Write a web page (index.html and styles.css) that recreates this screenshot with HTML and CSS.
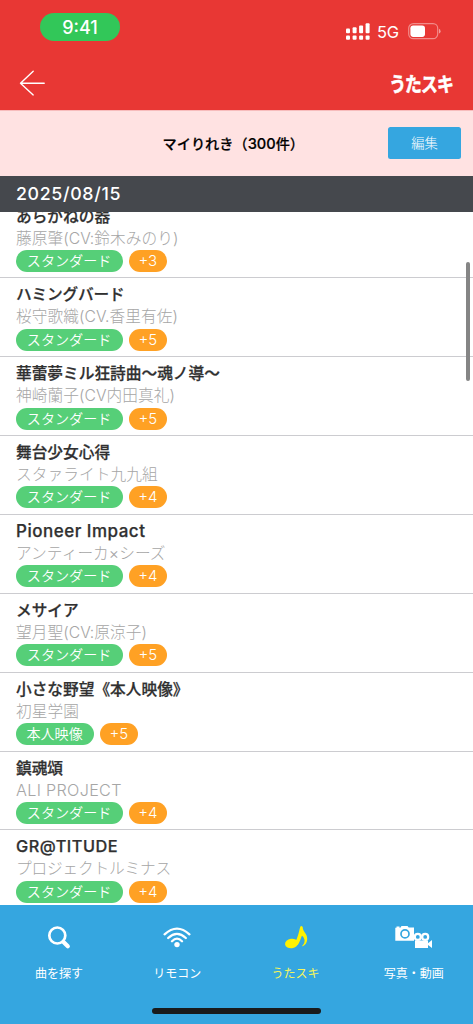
FILE: index.html
```html
<!DOCTYPE html>
<html lang="ja">
<head>
<meta charset="utf-8">
<title>マイりれき</title>
<link rel="stylesheet" href="styles.css">
</head>
<body>
<div class="app">
  <header class="header">
    <div class="status">
      <span class="time">9:41</span>
      <div class="status-right">
        <svg class="signal" width="24" height="18" viewBox="0 0 24 18" fill="#fff">
          <rect x="0" y="5.6" width="4" height="4.6" rx="1"/><rect x="6.6" y="4.2" width="4" height="6" rx="1"/><rect x="13.1" y="2.4" width="4" height="7.8" rx="1"/><rect x="19.6" y="0.2" width="4" height="10" rx="1"/>
          <rect x="0" y="12.6" width="4" height="4.2" rx="1"/><rect x="6.6" y="12.6" width="4" height="4.2" rx="1"/><rect x="13.1" y="12.6" width="4" height="4.2" rx="1"/><rect x="19.6" y="12.6" width="4" height="4.2" rx="1"/>
        </svg>
        <span class="network">5G</span>
        <svg class="battery" width="33" height="17" viewBox="0 0 33 17">
          <rect x=".7" y=".7" width="29" height="15" rx="4.6" fill="none" stroke="#fff" stroke-opacity=".42" stroke-width="1.2"/>
          <rect x="2.4" y="2.5" width="14.6" height="11.4" rx="2.8" fill="#fff"/>
          <path d="M31 5.8q1.6.7 1.6 2.4T31 10.600z" fill="#fff" fill-opacity=".5"/>
        </svg>
      </div>
    </div>
    <div class="nav">
      <svg class="back" width="26" height="26" viewBox="0 0 26 26" fill="none" stroke="#fff" stroke-width="1.4" stroke-linecap="round" stroke-linejoin="round"><path d="M14.200 1.300 1.500 13.200 14.200 24.900M1.500 13.200H25.200"/></svg>
      <span class="logo">うたスキ</span>
    </div>
  </header>
  <div class="titlebar">
    <h1 class="heading">マイりれき（<span class="total">300</span>件）</h1>
    <button class="edit">編集</button>
  </div>
  <div class="date">2025/08/15</div>
  <main class="list">
    <article class="row"><h2 class="title">あらがねの器</h2><p class="artist">藤原肇(CV:鈴木みのり)</p><div class="tags"><span class="tag">スタンダード</span><span class="tag count">+3</span></div></article>
    <article class="row"><h2 class="title kana">ハミングバード</h2><p class="artist">桜守歌織(CV.香里有佐)</p><div class="tags"><span class="tag">スタンダード</span><span class="tag count">+5</span></div></article>
    <article class="row"><h2 class="title">華蕾夢ミル狂詩曲〜魂ノ導〜</h2><p class="artist">神崎蘭子(CV内田真礼)</p><div class="tags"><span class="tag">スタンダード</span><span class="tag count">+5</span></div></article>
    <article class="row"><h2 class="title">舞台少女心得</h2><p class="artist">スタァライト九九組</p><div class="tags"><span class="tag">スタンダード</span><span class="tag count">+4</span></div></article>
    <article class="row"><h2 class="title latin">Pioneer Impact</h2><p class="artist">アンティーカ×シーズ</p><div class="tags"><span class="tag">スタンダード</span><span class="tag count">+4</span></div></article>
    <article class="row"><h2 class="title">メサイア</h2><p class="artist">望月聖(CV:原涼子)</p><div class="tags"><span class="tag">スタンダード</span><span class="tag count">+5</span></div></article>
    <article class="row"><h2 class="title">小さな野望《本人映像》</h2><p class="artist">初星学園</p><div class="tags"><span class="tag short">本人映像</span><span class="tag count">+5</span></div></article>
    <article class="row"><h2 class="title">鎮魂頌</h2><p class="artist latin-light">ALI PROJECT</p><div class="tags"><span class="tag">スタンダード</span><span class="tag count">+4</span></div></article>
    <article class="row"><h2 class="title caps">GR@TITUDE</h2><p class="artist kana">プロジェクトルミナス</p><div class="tags"><span class="tag">スタンダード</span><span class="tag count">+4</span></div></article>
    <div class="scrollbar"></div>
  </main>
  <footer class="footer">
    <nav class="tabs">
      <a class="tab"><svg width="42" height="26" viewBox="0 0 42 26" fill="none" stroke="#fff"><circle cx="19.300" cy="10.500" r="8" stroke-width="2.700"/><path d="m25.500 17 4.300 4.200" stroke-width="4.200" stroke-linecap="round"/></svg><span>曲を探す</span></a>
      <a class="tab"><svg width="42" height="26" viewBox="0 0 42 26" fill="none" stroke="#fff" stroke-width="2.300" stroke-linecap="round"><path d="M8.600 9.300Q21-2 33.400 9.300M12.200 13Q21 4.800 29.800 13M16 16.200Q21 11.200 26 16.200"/><circle cx="21" cy="19.600" r="2.700" fill="#fff" stroke="none"/></svg><span>リモコン</span></a>
      <a class="tab active"><svg width="42" height="26" viewBox="0 0 42 26" fill="#fff200"><ellipse cx="16.500" cy="18.500" rx="6.500" ry="4.700" transform="rotate(-8 16.500 18.500)"/><path d="M19.600 18C23.300 12.500 23.800 6.300 25.300 1.800q1-1.600 2.400.200C27.800 7.200 32.200 8.100 32.200 14c0 3.300-1.700 6-4.400 7.300-.7.100-.8-.4-.3-.8 3.300-3 2.400-7.700-.6-9.700-1.200 2.800-2.200 6.800-4.300 9.500z"/></svg><span>うたスキ</span></a>
      <a class="tab"><svg width="42" height="26" viewBox="0 0 42 26" fill="#fff"><path d="M2.300 2.700h5L8.500 1h6L15.700 2.500H21v13.300H2.300zM3.500 1.500h3v1.500h-3z"/><circle cx="12" cy="8.900" r="4" fill="none" stroke="#35a6e0" stroke-width="1.700"/><circle cx="24.800" cy="11.900" r="3" fill="#35a6e0" stroke="#fff" stroke-width="2.200"/><circle cx="32.200" cy="11.900" r="3" fill="#35a6e0" stroke="#fff" stroke-width="2.200"/><path d="M22 15.500h13v2.700l4-3.200v8l-4-3v3H22z"/></svg><span>写真・動画</span></a>
    </nav>
    <div class="home"></div>
  </footer>
</div>
</body>
</html>
```
FILE: styles.css
```css
* { box-sizing: border-box; margin: 0; padding: 0; }
body { font-family: "Noto Sans CJK JP", sans-serif; background: #fff; }
.app { width: 473px; height: 1024px; display: flex; flex-direction: column; overflow: hidden; }
.header { height: 110px; flex: none; background: #e83734; color: #fff; display: flex; flex-direction: column; }
.status { height: 55px; padding: 13px 32px 0 40px; display: flex; justify-content: space-between; align-items: flex-start; }
.time { width: 80px; height: 28px; border-radius: 14px; background: #32c759; text-align: center; font: 500 18px/29px Inter, sans-serif; }
.status-right { display: flex; align-items: center; padding-top: 9px; height: 28px; }
.network { font: 400 16.5px/18px Inter, sans-serif; margin: 0 9px 0 7px; width: 22px; letter-spacing: -.2px; padding-top: 1px; }
.nav { height: 55px; padding: 0 21px 0 18.500px; display: flex; align-items: center; justify-content: space-between; }
.logo { font-size: 20px; font-weight: 700; line-height: 24px; letter-spacing: -1px; margin-right: -1px; padding-top: 2px; transform: scaleX(.84); transform-origin: right; -webkit-text-stroke: .6px #fff; }
.titlebar { height: 66px; flex: none; background: #ffe2e2; border-top: 1px solid #f7bcbc; display: grid; grid-template-columns: 1fr 73px; align-items: center; padding-right: 12px; }
.heading { font-size: 14.200px; font-weight: 500; color: #000; padding-left: 162.500px; margin-top: -2px; -webkit-text-stroke: .2px #000; white-space: nowrap; }
.total { font-family: Inter, sans-serif; font-size: 14.600px; }
.edit { height: 32px; margin-top: -1px; border: 0; border-radius: 2.500px; background: #35a6e0; color: #fff; font: 300 13.300px/32px "Noto Sans CJK JP", sans-serif; }
.date { height: 36px; flex: none; background: #45484d; color: #fff; padding-left: 16px; font: 500 17.800px/36px Inter, sans-serif; letter-spacing: .65px; }
.list { flex: 1; min-height: 0; overflow: hidden; position: relative; }
.row { height: 78.860px; padding: 6px 16px 0; border-bottom: 1px solid #ccccd0; }
.row:first-child { margin-top: -12.500px; }
.title { font-size: 15.700px; line-height: 22px; font-weight: 500; color: #303030; -webkit-text-stroke: .25px #303030; white-space: nowrap; font-family: Inter, "Noto Sans CJK JP", sans-serif; }
.latin { font-size: 17px; letter-spacing: .5px; margin-top: -1px; margin-bottom: 1px; }
.caps { font-size: 16.300px; letter-spacing: .5px; margin-top: -1px; margin-bottom: 1px; }
.artist { font-size: 15.700px; line-height: 22px; font-weight: 300; color: #a6a6a6; white-space: nowrap; font-family: Inter, "Noto Sans CJK JP", sans-serif; letter-spacing: .05px; }
.latin-light { font-size: 16.200px; letter-spacing: .3px; margin-top: -1px; margin-bottom: 1px; }
.kana { letter-spacing: -.2px; }
.tags { display: flex; gap: 6px; margin-top: .3px; margin-left: -.4px; }
.tag { width: 107px; height: 22px; border-radius: 11px; background: #56cf78; color: #fff; text-align: center; font: 350 14.100px/22px Inter, "Noto Sans CJK JP", sans-serif; white-space: nowrap; }
.short { width: 78px; }
.count { width: 38.500px; background: #ffa124; font-size: 15px; font-weight: 300; }
.scrollbar { position: absolute; top: 50px; right: 3px; width: 4px; height: 119px; border-radius: 2px; background: #858585; }
.footer { height: 119px; flex: none; background: #35a6e0; }
.tabs { height: 101px; display: grid; grid-template-columns: repeat(4, 1fr); padding-top: 19.500px; }
.tab { display: flex; flex-direction: column; align-items: center; color: #fff; font-size: 12px; line-height: 18px; gap: 13.500px; font-weight: 400; }
.active { color: #f5f55c; }
.home { width: 169px; height: 6px; border-radius: 3px; background: #191b1c; margin: 2px auto 0; }
```
